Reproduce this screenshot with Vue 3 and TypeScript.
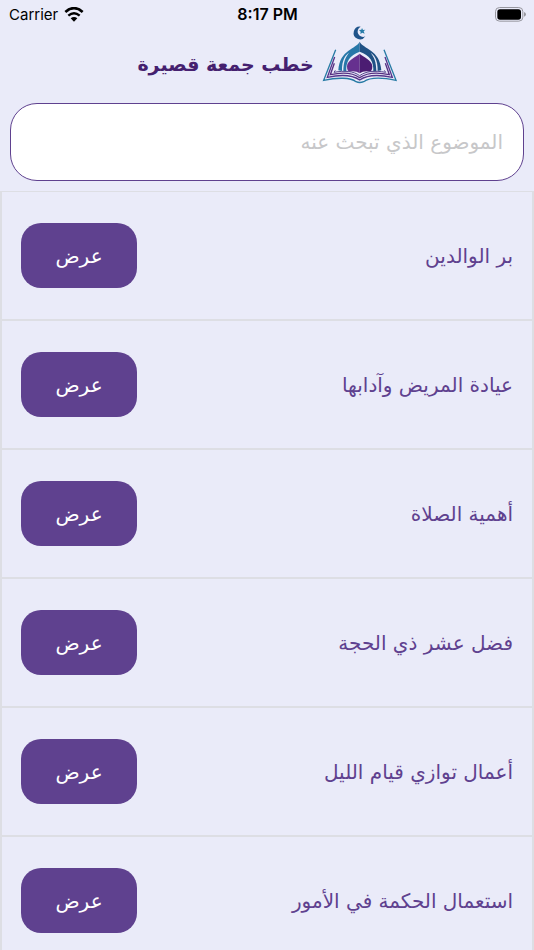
<script setup lang="ts">
import { ref } from 'vue'

const query = ref<string>('')
const topics: string[] = [
  'بر الوالدين',
  'عيادة المريض وآدابها',
  'أهمية الصلاة',
  'فضل عشر ذي الحجة',
  'أعمال توازي قيام الليل',
  'استعمال الحكمة في الأمور',
]
</script>

<template>
  <div class="screen" dir="rtl" lang="ar">
    <div class="status" dir="ltr" lang="en">
      <div class="carrier">
        <span>Carrier</span>
        <svg class="wifi" viewBox="0 0 60 45" aria-hidden="true">
          <path d="M4 15Q30-8 56 15" fill="none" stroke="#000" stroke-width="8" />
          <path d="M13 26Q30 11 47 26" fill="none" stroke="#000" stroke-width="7" />
          <path d="M20 34Q30 26 40 34L30 44Z" fill="#000" />
        </svg>
      </div>
      <span class="time">8:17 PM</span>
      <div class="power">
        <svg class="battery" viewBox="0 0 93 45" aria-hidden="true">
          <rect x="1.5" y="1.5" width="82" height="41" rx="12" fill="none" stroke="#97979f" stroke-width="3" />
          <rect x="7" y="7" width="71" height="31" rx="8" fill="#000" />
          <path d="M87 15Q93 17 93 22T87 29Z" fill="#97979f" />
        </svg>
      </div>
    </div>

    <header class="brand">
      <svg class="logo" viewBox="30 15 225 177" aria-hidden="true">
        <path d="M146 20A19 19 0 1 0 160 49A15 15 0 1 1 146 20Z" fill="#20548a" />
        <path d="M150 24l3 6 7-1-5 5 3 7-7-3-6 4 1-7-5-5 7-1Z" fill="#277ca8" />
        <path d="M143 65C133 87 83 88 79 151L90 153C89 119 101 105 111 98C101 112 94 124 94 154L103 156C101 124 113 106 143 95Z" fill="#2878a8" />
        <path d="M143 65C153 87 204 88 208 151L197 153C198 119 186 105 176 98C186 112 193 124 193 154L184 156C186 124 174 106 143 95Z" fill="#205285" />
        <path d="M143 101C132 112 106 119 105 139Q104 148 110 155Q131 151 143 160Z" fill="#66308f" />
        <path d="M143 101C154 112 180 119 181 139Q182 148 176 155Q155 151 143 160Z" fill="#4b1c72" />
        <g fill="none" stroke-width="4">
          <path d="M71 89L35 181C75 172 116 172 132 185Q143 190 155 185C173 172 211 172 252 181L216 89" stroke="#287ba5" />
          <path d="M68 111L46 172C83 164 120 164 143 180C166 164 204 164 241 172L219 111" stroke="#56368b" />
          <path d="M67 130L55 164C91 156 121 157 143 173C166 157 196 156 232 164L220 130" stroke="#563083" />
          <path d="M70 151L66 157C99 151 124 153 143 167C163 153 188 151 221 157L217 151" stroke="#57458f" stroke-width="3" />
        </g>
      </svg>
      <h1>خطب جمعة قصيرة</h1>
    </header>

    <form class="search" role="search" @submit.prevent>
      <input v-model="query" type="text" aria-label="الموضوع الذي تبحث عنه" placeholder="الموضوع الذي تبحث عنه" />
    </form>

    <ul class="topics">
      <li v-for="topic in topics" :key="topic">
        <span class="title">{{ topic }}</span>
        <button type="button">عرض</button>
      </li>
    </ul>
  </div>
</template>

<style>
body {
  background: #eaebf9;
}
</style>

<style scoped>
.screen {
  height: 100vh;
  overflow: hidden;
  background: #eaebf9;
  color: #5f418f;
  font-family: "DejaVu Sans", sans-serif;
}
.status {
  display: grid;
  grid-template-columns: 1fr auto 1fr;
  align-items: center;
  height: 28px;
  padding: 0 8px 0 9px;
  color: #000;
  font-family: Inter, sans-serif;
  font-size: 15px;
}
.carrier {
  display: flex;
  align-items: center;
  gap: 6px;
}
.wifi {
  width: 20px;
  height: 15px;
}
.time {
  font-size: 16px;
  font-weight: 600;
}
.power {
  display: flex;
  justify-content: flex-end;
}
.battery {
  width: 31px;
  height: 15px;
}
.brand {
  display: flex;
  align-items: center;
  justify-content: center;
  gap: 8px;
  height: 75px;
}
.logo {
  width: 75px;
  height: 59px;
  margin-bottom: 22px;
}
h1 {
  margin: 0 0 4px;
  color: #45206f;
  font-size: 19px;
  line-height: 32px;
  font-weight: 700;
}
.search {
  padding: 0 10px 10px;
}
.search input {
  display: block;
  box-sizing: border-box;
  width: 100%;
  height: 78px;
  padding: 0 20px;
  border: 1px solid #5f418f;
  border-radius: 27px;
  outline: none;
  background: #fff;
  color: #5f418f;
  font-family: inherit;
  font-size: 20px;
}
.search input::placeholder {
  color: #c7c7c9;
  opacity: 1;
}
.topics {
  margin: 0;
  padding: 0;
  list-style: none;
}
.topics li {
  display: flex;
  align-items: center;
  justify-content: space-between;
  box-sizing: border-box;
  height: 129px;
  padding: 0 19px;
  border: solid #dddee4;
  border-width: 1px 2px;
}
.title {
  font-size: 20px;
  line-height: 32px;
}
button {
  width: 116px;
  height: 65px;
  padding: 0;
  border: 0;
  border-radius: 20px;
  background: #5f418f;
  color: #fff;
  font-family: inherit;
  font-size: 20px;
  cursor: pointer;
}
</style>
